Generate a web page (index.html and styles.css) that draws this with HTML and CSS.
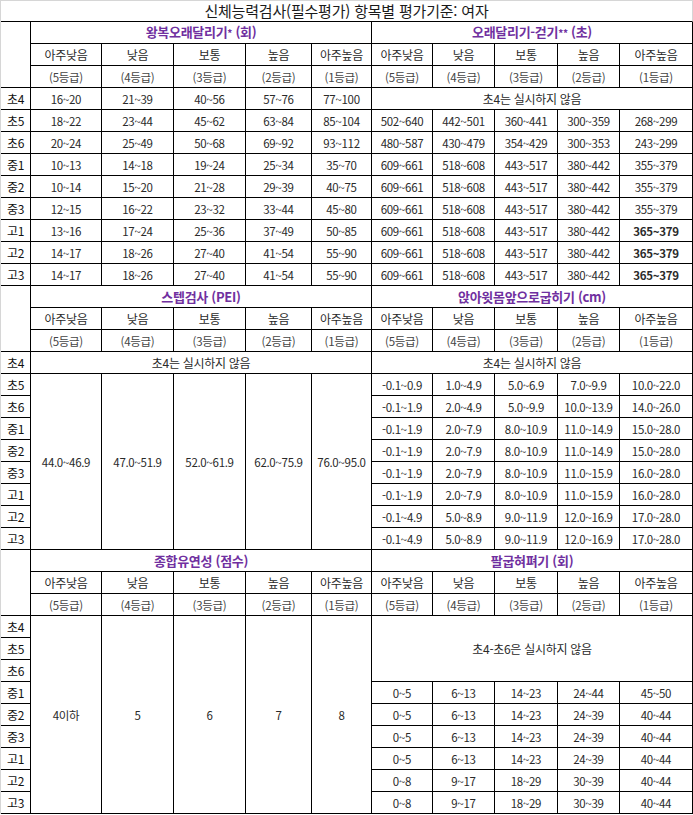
FILE: index.html
```html
<!DOCTYPE html>
<html lang="ko">
<head>
<meta charset="utf-8">
<title>신체능력검사 항목별 평가기준: 여자</title>
<link rel="stylesheet" href="styles.css">
</head>
<body>
<table class="sheet">
  <colgroup>
    <col class="w30"><col class="w71"><col class="w72"><col class="w72"><col class="w66"><col class="w60">
    <col class="w61"><col class="w62"><col class="w63"><col class="w62"><col class="w73">
  </colgroup>
  <tr><td colspan="11" class="title">신체능력검사(필수평가) 항목별 평가기준: 여자</td></tr>

  <!-- Section 1 -->
  <tr><td rowspan="3" class="lbl"></td><td colspan="5" class="sec">왕복오래달리기<span class="ast">*</span> (회)</td><td colspan="5" class="sec">오래달리기-걷기<span class="ast">**</span> (초)</td></tr>
  <tr class="hd"><td>아주낮음</td><td>낮음</td><td>보통</td><td>높음</td><td>아주높음</td><td>아주낮음</td><td>낮음</td><td>보통</td><td>높음</td><td>아주높음</td></tr>
  <tr class="gr"><td>(5등급)</td><td>(4등급)</td><td>(3등급)</td><td>(2등급)</td><td>(1등급)</td><td>(5등급)</td><td>(4등급)</td><td>(3등급)</td><td>(2등급)</td><td>(1등급)</td></tr>
  <tr class="num"><td class="lbl">초4</td><td>16~20</td><td>21~39</td><td>40~56</td><td>57~76</td><td>77~100</td><td colspan="5" class="note">초4는 실시하지 않음</td></tr>
  <tr class="num"><td class="lbl">초5</td><td>18~22</td><td>23~44</td><td>45~62</td><td>63~84</td><td>85~104</td><td>502~640</td><td>442~501</td><td>360~441</td><td>300~359</td><td>268~299</td></tr>
  <tr class="num"><td class="lbl">초6</td><td>20~24</td><td>25~49</td><td>50~68</td><td>69~92</td><td>93~112</td><td>480~587</td><td>430~479</td><td>354~429</td><td>300~353</td><td>243~299</td></tr>
  <tr class="num"><td class="lbl">중1</td><td>10~13</td><td>14~18</td><td>19~24</td><td>25~34</td><td>35~70</td><td>609~661</td><td>518~608</td><td>443~517</td><td>380~442</td><td>355~379</td></tr>
  <tr class="num"><td class="lbl">중2</td><td>10~14</td><td>15~20</td><td>21~28</td><td>29~39</td><td>40~75</td><td>609~661</td><td>518~608</td><td>443~517</td><td>380~442</td><td>355~379</td></tr>
  <tr class="num"><td class="lbl">중3</td><td>12~15</td><td>16~22</td><td>23~32</td><td>33~44</td><td>45~80</td><td>609~661</td><td>518~608</td><td>443~517</td><td>380~442</td><td>355~379</td></tr>
  <tr class="num"><td class="lbl">고1</td><td>13~16</td><td>17~24</td><td>25~36</td><td>37~49</td><td>50~85</td><td>609~661</td><td>518~608</td><td>443~517</td><td>380~442</td><td class="b">365~379</td></tr>
  <tr class="num"><td class="lbl">고2</td><td>14~17</td><td>18~26</td><td>27~40</td><td>41~54</td><td>55~90</td><td>609~661</td><td>518~608</td><td>443~517</td><td>380~442</td><td class="b">365~379</td></tr>
  <tr class="num"><td class="lbl">고3</td><td>14~17</td><td>18~26</td><td>27~40</td><td>41~54</td><td>55~90</td><td>609~661</td><td>518~608</td><td>443~517</td><td>380~442</td><td class="b">365~379</td></tr>

  <!-- Section 2 -->
  <tr><td rowspan="3" class="lbl"></td><td colspan="5" class="sec">스텝검사 (PEI)</td><td colspan="5" class="sec">앉아윗몸앞으로굽히기 (cm)</td></tr>
  <tr class="hd"><td>아주낮음</td><td>낮음</td><td>보통</td><td>높음</td><td>아주높음</td><td>아주낮음</td><td>낮음</td><td>보통</td><td>높음</td><td>아주높음</td></tr>
  <tr class="gr"><td>(5등급)</td><td>(4등급)</td><td>(3등급)</td><td>(2등급)</td><td>(1등급)</td><td>(5등급)</td><td>(4등급)</td><td>(3등급)</td><td>(2등급)</td><td>(1등급)</td></tr>
  <tr class="num"><td class="lbl">초4</td><td colspan="5" class="note">초4는 실시하지 않음</td><td colspan="5" class="note">초4는 실시하지 않음</td></tr>
  <tr class="num"><td class="lbl">초5</td><td rowspan="8">44.0~46.9</td><td rowspan="8">47.0~51.9</td><td rowspan="8">52.0~61.9</td><td rowspan="8">62.0~75.9</td><td rowspan="8">76.0~95.0</td><td>-0.1~0.9</td><td>1.0~4.9</td><td>5.0~6.9</td><td>7.0~9.9</td><td>10.0~22.0</td></tr>
  <tr class="num"><td class="lbl">초6</td><td>-0.1~1.9</td><td>2.0~4.9</td><td>5.0~9.9</td><td>10.0~13.9</td><td>14.0~26.0</td></tr>
  <tr class="num"><td class="lbl">중1</td><td>-0.1~1.9</td><td>2.0~7.9</td><td>8.0~10.9</td><td>11.0~14.9</td><td>15.0~28.0</td></tr>
  <tr class="num"><td class="lbl">중2</td><td>-0.1~1.9</td><td>2.0~7.9</td><td>8.0~10.9</td><td>11.0~14.9</td><td>15.0~28.0</td></tr>
  <tr class="num"><td class="lbl">중3</td><td>-0.1~1.9</td><td>2.0~7.9</td><td>8.0~10.9</td><td>11.0~15.9</td><td>16.0~28.0</td></tr>
  <tr class="num"><td class="lbl">고1</td><td>-0.1~1.9</td><td>2.0~7.9</td><td>8.0~10.9</td><td>11.0~15.9</td><td>16.0~28.0</td></tr>
  <tr class="num"><td class="lbl">고2</td><td>-0.1~4.9</td><td>5.0~8.9</td><td>9.0~11.9</td><td>12.0~16.9</td><td>17.0~28.0</td></tr>
  <tr class="num"><td class="lbl">고3</td><td>-0.1~4.9</td><td>5.0~8.9</td><td>9.0~11.9</td><td>12.0~16.9</td><td>17.0~28.0</td></tr>

  <!-- Section 3 -->
  <tr><td rowspan="3" class="lbl"></td><td colspan="5" class="sec">종합유연성 (점수)</td><td colspan="5" class="sec">팔굽혀펴기 (회)</td></tr>
  <tr class="hd"><td>아주낮음</td><td>낮음</td><td>보통</td><td>높음</td><td>아주높음</td><td>아주낮음</td><td>낮음</td><td>보통</td><td>높음</td><td>아주높음</td></tr>
  <tr class="gr"><td>(5등급)</td><td>(4등급)</td><td>(3등급)</td><td>(2등급)</td><td>(1등급)</td><td>(5등급)</td><td>(4등급)</td><td>(3등급)</td><td>(2등급)</td><td>(1등급)</td></tr>
  <tr class="num"><td class="lbl">초4</td><td rowspan="9">4이하</td><td rowspan="9">5</td><td rowspan="9">6</td><td rowspan="9">7</td><td rowspan="9">8</td><td colspan="5" rowspan="3" class="note">초4-초6은 실시하지 않음</td></tr>
  <tr class="num"><td class="lbl">초5</td></tr>
  <tr class="num"><td class="lbl">초6</td></tr>
  <tr class="num"><td class="lbl">중1</td><td>0~5</td><td>6~13</td><td>14~23</td><td>24~44</td><td>45~50</td></tr>
  <tr class="num"><td class="lbl">중2</td><td>0~5</td><td>6~13</td><td>14~23</td><td>24~39</td><td>40~44</td></tr>
  <tr class="num"><td class="lbl">중3</td><td>0~5</td><td>6~13</td><td>14~23</td><td>24~39</td><td>40~44</td></tr>
  <tr class="num"><td class="lbl">고1</td><td>0~5</td><td>6~13</td><td>14~23</td><td>24~39</td><td>40~44</td></tr>
  <tr class="num"><td class="lbl">고2</td><td>0~8</td><td>9~17</td><td>18~29</td><td>30~39</td><td>40~44</td></tr>
  <tr class="num"><td class="lbl">고3</td><td>0~8</td><td>9~17</td><td>18~29</td><td>30~39</td><td>40~44</td></tr>
</table>
</body>
</html>
```
FILE: styles.css
```css
html, body {
  margin: 0;
  padding: 0;
  background: #ffffff;
}

body {
  font-family: "Noto Sans CJK KR", "Noto Sans", sans-serif;
  color: #222222;
}

.sheet {
  border-collapse: separate;
  border-spacing: 0;
  table-layout: fixed;
  width: 693px;
  border-left: 1px solid #d6d6d6;
}

.w30 { width: 30px; }
.w60 { width: 60px; }
.w61 { width: 61px; }
.w62 { width: 62px; }
.w63 { width: 63px; }
.w66 { width: 66px; }
.w71 { width: 71px; }
.w72 { width: 72px; }
.w73 { width: 73px; }

.sheet td {
  box-sizing: border-box;
  height: 22px;
  padding: 0;
  border-right: 1px solid #000000;
  border-bottom: 1px solid #000000;
  text-align: center;
  vertical-align: middle;
  font-size: 12px;
  line-height: 16px;
  white-space: nowrap;
  overflow: hidden;
  letter-spacing: -0.3px;
}

.sheet td.title {
  border-top: 1px solid #d6d6d6;
  border-right-color: #d6d6d6;
  font-size: 15px;
  color: #1a1a1a;
  letter-spacing: -0.2px;
}

.sheet td.sec {
  color: #7030a0;
  font-weight: 700;
  font-size: 13px;
}

.ast {
  font-size: 10px;
}

.hd td {
  color: #2a2a2a;
}

.gr td {
  color: #444444;
  font-size: 11.5px;
}

.num td {
  font-size: 11.5px;
  color: #2a2a2a;
}

.num td.lbl {
  font-size: 12px;
  color: #111111;
}

.num td.note {
  font-size: 12px;
}

.num td.b {
  font-weight: 700;
}
```
